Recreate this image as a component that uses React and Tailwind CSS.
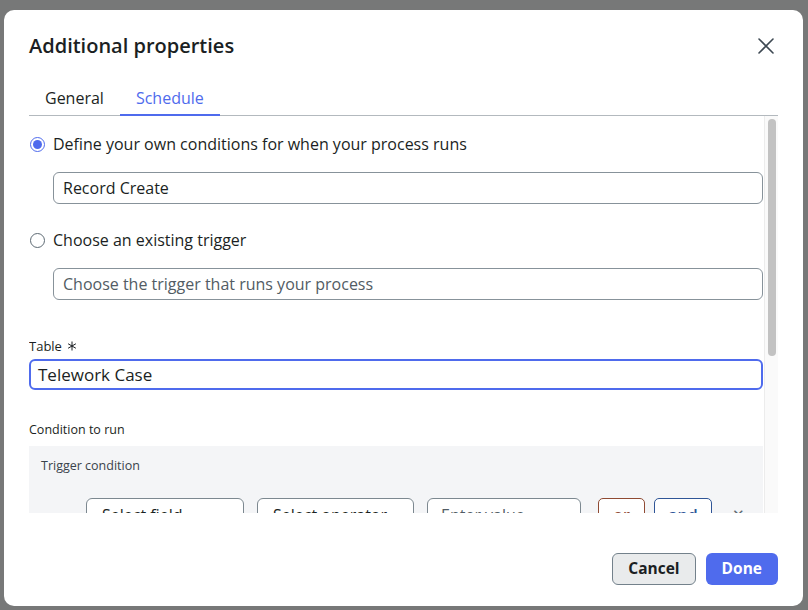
import React, { useState } from "react";

const font = { fontFamily: '"Open Sans", "Noto Sans", sans-serif' };

// little radio circle, drawn with css
const Radio = ({ checked }) => (
  <span
    className={
      "flex items-center justify-center w-[15px] h-[15px] rounded-full border bg-white " +
      (checked ? "border-[#4f6bed]" : "border-[#5d6a73]")
    }
  >
    {checked && <span className="w-[9px] h-[9px] rounded-full bg-[#4f6bed]" />}
  </span>
);

const App = () => {
  const [tab, setTab] = useState("schedule");

  return (
    <div className="w-[808px] h-[610px] bg-[#777878] overflow-hidden pt-[10px] pl-[4px]" style={font}>
      <div className="w-[799px] h-[596px] bg-white rounded-[10px] flex flex-col px-[25px] pt-[24px] pb-[21px]">
        {/* header */}
        <div className="flex items-center justify-between h-[24px] shrink-0">
          <h1 className="text-[20px] leading-[24px] font-semibold text-[#1b1f23]">Additional properties</h1>
          <svg width="16" height="16" viewBox="0 0 16 16" className="mr-[4px]">
            <path d="M1 1 L15 15 M15 1 L1 15" stroke="#3d4852" strokeWidth="1.6" strokeLinecap="round" />
          </svg>
        </div>

        {/* tabs */}
        <div className="flex mt-[28px] border-b border-[#b3b9be] shrink-0">
          <button
            onClick={() => setTab("general")}
            className={
              "px-[16px] pb-[4px] text-[16px] leading-[24px] border-b-2 -mb-px " +
              (tab === "general" ? "text-[#4f6bed] border-[#4f6bed]" : "text-[#1b1f23] border-transparent")
            }
          >
            General
          </button>
          <button
            onClick={() => setTab("schedule")}
            className={
              "px-[16px] pb-[4px] text-[16px] leading-[24px] border-b-2 -mb-px " +
              (tab === "schedule" ? "text-[#4f6bed] border-[#4f6bed]" : "text-[#1b1f23] border-transparent")
            }
          >
            Schedule
          </button>
        </div>

        {/* scroll area */}
        <div className="flex h-[397px] shrink-0 overflow-hidden">
          <div className="flex-1 flex flex-col pt-[16px] pr-[1px] overflow-hidden">
            <label className="flex items-center gap-[8px] h-[24px] pl-[1px] shrink-0">
              <Radio checked />
              <span className="text-[16px] text-[#1b1f23]">Define your own conditions for when your process runs</span>
            </label>
            <div className="shrink-0 ml-[24px] mt-[16px] h-[32px] border border-[#87929a] rounded-[6px] flex items-center px-[9px] text-[16px] text-[#1b1f23]">
              Record Create
            </div>

            <label className="flex items-center gap-[8px] h-[24px] pl-[1px] mt-[24px] shrink-0">
              <Radio />
              <span className="text-[16px] text-[#1b1f23]">Choose an existing trigger</span>
            </label>
            <div className="shrink-0 ml-[24px] mt-[16px] h-[32px] border border-[#87929a] rounded-[6px] flex items-center px-[9px] text-[16px] text-[#525c64]">
              Choose the trigger that runs your process
            </div>

            <div className="shrink-0 mt-[37px] h-[18px] text-[13px] leading-[18px] text-[#1b1f23] flex items-center gap-[5px]">
              Table
              <svg width="10" height="10" viewBox="0 0 10 10">
                <path d="M5 0.5 V9.5 M1.1 2.75 L8.9 7.25 M8.9 2.75 L1.1 7.25" stroke="#1b1f23" strokeWidth="1" />
              </svg>
            </div>
            <div className="shrink-0 mt-[4px] h-[31px] border-2 border-[#4f6bed] rounded-[6px] flex items-center px-[7px] text-[17px] text-[#1b1f23]">
              Telework Case
            </div>

            <div className="shrink-0 mt-[31px] text-[12.5px] leading-[18px] text-[#1b1f23]">Condition to run</div>
            <div className="shrink-0 mt-[7px] bg-[#f4f5f7] h-[120px] pl-[12px] pt-[11px]">
              <div className="text-[12.5px] leading-[18px] text-[#39434b]">Trigger condition</div>
              <div className="flex items-start mt-[23px] ml-[45px]">
                <div className="w-[158px] h-[34px] border border-[#7c8890] rounded-[6px] bg-white px-[15px] pt-[4px] text-[16px] text-[#1b1f23]">Select field</div>
                <div className="ml-[13px] w-[157px] h-[34px] border border-[#7c8890] rounded-[6px] bg-white px-[15px] pt-[4px] text-[16px] text-[#1b1f23]">Select operator</div>
                <div className="ml-[13px] w-[154px] h-[34px] border border-[#7c8890] rounded-[6px] bg-white px-[13px] pt-[4px] text-[16px] text-[#525c64]">Enter value</div>
                <div className="ml-[17px] w-[47px] h-[34px] border border-[#8f4a33] rounded-[5px] bg-white flex justify-center pt-[4px] text-[16px] font-semibold text-[#8f4a33]">or</div>
                <div className="ml-[9px] w-[58px] h-[34px] border border-[#2f5597] rounded-[5px] bg-white flex justify-center pt-[4px] text-[16px] font-semibold text-[#2f5597]">and</div>
                <div className="ml-[20px] pt-[5px] text-[15px] text-[#5d6a73]">✕</div>
              </div>
            </div>
          </div>

          {/* scrollbar */}
          <div className="w-[14px] bg-[#fafafa] border-l border-[#ececec] flex justify-center pt-[3px]">
            <div className="w-[8px] h-[237px] rounded-full bg-[#c2c2c2]" />
          </div>
        </div>

        {/* footer */}
        <div className="mt-auto flex justify-end gap-[10px] shrink-0">
          <button className="h-[32px] px-[15px] rounded-[6px] bg-[#e9ebec] border border-[#73818b] text-[15.5px] font-bold text-[#1b1f23]">
            Cancel
          </button>
          <button className="h-[32px] px-[16px] rounded-[6px] bg-[#4f6bed] text-[15.5px] font-bold text-white">
            Done
          </button>
        </div>
      </div>
    </div>
  );
};

export default App;
